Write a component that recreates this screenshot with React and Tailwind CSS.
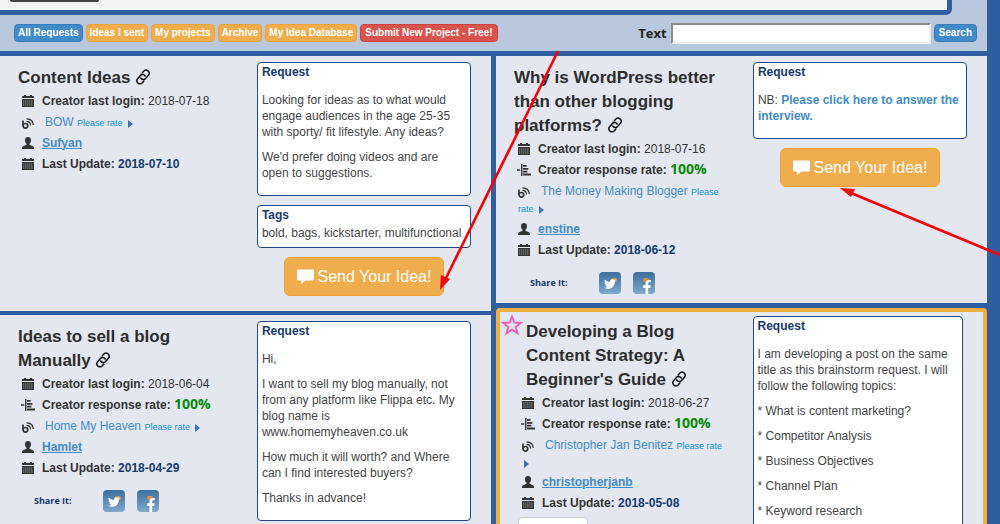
import { FaFacebookF, FaTwitter } from "react-icons/fa";

const filters = ["Ideas I sent", "My projects", "Archive", "My Idea Database"];

const leftRequests = [
  {
    title: "Content Ideas",
    login: "2018-07-18",
    blog: "BOW",
    user: "Sufyan",
    updated: "2018-07-10",
    body: [
      "Looking for ideas as to what would engage audiences in the age 25-35 with sporty/ fit lifestyle. Any ideas?",
      "We'd prefer doing videos and are open to suggestions.",
    ],
    tags: "bold, bags, kickstarter, multifunctional",
    canSend: true,
  },
  {
    title: "Ideas to sell a blog Manually",
    login: "2018-06-04",
    rate: "100%",
    blog: "Home My Heaven",
    user: "Hamlet",
    updated: "2018-04-29",
    share: true,
    body: [
      "Hi,",
      "I want to sell my blog manually, not from any platform like Flippa etc. My blog name is www.homemyheaven.co.uk",
      "How much it will worth? and Where can I find interested buyers?",
      "Thanks in advance!",
    ],
  },
];

const rightRequests = [
  {
    title: "Why is WordPress better than other blogging platforms?",
    login: "2018-07-16",
    rate: "100%",
    blog: "The Money Making Blogger",
    user: "enstine",
    updated: "2018-06-12",
    share: true,
    body: [
      <>
        NB:{" "}
        <a href="#interview" className="font-bold text-[#428bca]">
          Please click here to answer the interview.
        </a>
      </>,
    ],
    canSend: true,
  },
  {
    title: "Developing a Blog Content Strategy: A Beginner's Guide",
    login: "2018-06-27",
    rate: "100%",
    blog: "Christopher Jan Benitez",
    user: "christopherjanb",
    updated: "2018-05-08",
    featured: true,
    body: [
      "I am developing a post on the same title as this brainstorm request. I will follow the following topics:",
      "* What is content marketing?",
      "* Competitor Analysis",
      "* Business Objectives",
      "* Channel Plan",
      "* Keyword research",
    ],
  },
];

function CalendarIcon() {
  return (
    <svg viewBox="0 0 12 12" className="h-3 w-3" fill="currentColor">
      <path d="M0 1h2V0h2v1h4V0h2v1h2v2H0zM0 4h12v8H0z" />
      <path d="M1 6h10M1 8h10M1 10h10" stroke="#e4e7ef" strokeWidth="0.5" strokeDasharray="1.4 0.6" />
    </svg>
  );
}

function RateIcon() {
  return (
    <svg viewBox="0 0 14 12" className="h-3 w-3.5 shrink-0" fill="currentColor">
      <path d="M0 5.2h3.2v1.6H0zM4 0h1.4v12H4zM6 1h3.6v1.8H6zM6 4h5.4v1.8H6zM6 6.8h4.4v1.6H6zM6 9.6h8v1.8H6z" />
    </svg>
  );
}

function BlogIcon() {
  return (
    <svg viewBox="0 0 12 12" className="mr-[11px] inline h-3 w-3 align-[-3px]" fill="none" stroke="currentColor">
      <path d="M1 3.5v5.3" strokeWidth="1.7" />
      <circle cx="3.4" cy="8.8" r="2.3" strokeWidth="1.7" />
      <path d="M4.5 4.4c2.400 0 4 1.500 4 4" strokeWidth="1.2" />
      <path d="M4.500 1.900c4 0 6.700 2.400 6.700 6.200" strokeWidth="1.200" />
    </svg>
  );
}

function UserIcon() {
  return (
    <svg viewBox="0 0 12 12" className="h-3 w-3" fill="currentColor">
      <path d="M6 0C4.200 0 3 1.200 3 3.200c0 1.700.7 2.900 1.500 3.600v1L1 9.300C.3 9.600 0 10.200 0 11v1h12v-1c0-.8-.3-1.400-1-1.700L7.500 7.800v-1C8.300 6.100 9 4.900 9 3.200 9 1.200 7.800 0 6 0z" />
    </svg>
  );
}

function ChainIcon() {
  return (
    <svg viewBox="0 0 16 16" className="h-4 w-4" fill="none" stroke="currentColor" strokeWidth="1.500" strokeLinecap="round">
      <g transform="rotate(-50 8 8)">
        <path d="M5.500 11.200H3.200a3.100 3.100 0 0 1 0-6.200H7.500a3 3 0 0 1 2.700 4.200" />
        <path d="M10.500 4.800h2.300a3.100 3.100 0 0 1 0 6.200H8.500a3 3 0 0 1-2.700-4.200" />
      </g>
    </svg>
  );
}

function StarIcon() {
  return (
    <svg viewBox="0 0 24 24" className="absolute top-px left-0 h-6 w-6" fill="none" stroke="#ee63b4" strokeWidth="2">
      <path d="M12 3.500l2.300 6.100 6.500.3-5.100 4.100 1.800 6.300L12 16.700l-5.500 3.600 1.800-6.300-5.100-4.100 6.500-.3z" />
    </svg>
  );
}

function Row({ icon, children }) {
  return (
    <li className="flex h-[21px] items-center gap-2">
      <span className="flex w-3 shrink-0 justify-center">{icon}</span>
      <span className="whitespace-nowrap">{children}</span>
    </li>
  );
}

const shareLink =
  "relative flex h-[22px] w-[22px] items-end justify-center rounded bg-linear-to-b from-[#3b6f9f] to-[#7fa9cd]";

function ShareBar() {
  return (
    <div className="mt-3 flex items-center pl-4 font-['Open_Sans',sans-serif]">
      <span className="mr-[31px] text-[9px] font-bold text-[#15396f]">Share It:</span>
      <a href="#twitter" aria-label="Twitter" className={`${shareLink} mr-3 pb-1`}>
        <span className="absolute top-1.5 right-1 h-1 w-1.5 rounded-full bg-[#e0913f]" />
        <FaTwitter className="relative h-3 w-3 text-white" />
      </a>
      <a href="#facebook" aria-label="Facebook" className={shareLink}>
        <span className="absolute top-1.5 right-1.5 h-1 w-1.5 rounded-full bg-[#e0913f]" />
        <FaFacebookF className="relative ml-1.5 h-3.5 w-3.5 text-white" />
      </a>
    </div>
  );
}

function RequestCard({ item, last }) {
  return (
    <article
      className={`relative grid grid-cols-[6fr_5fr] items-start bg-[#e4e7ef] pr-5 ${
        item.featured ? "rounded-sm border-4 border-[#f0b040] pt-1" : "pt-1.5"
      } ${last ? "flex-1" : ""}`}
    >
      {item.featured && <StarIcon />}
      <div className="pt-1 pr-6 pb-[9px] pl-[18px]">
        <h2 className={`text-[17px] leading-6 font-bold text-[#2d2d2d] ${item.featured ? "pl-2" : ""}`}>
          {item.title}{" "}
          <a href="#permalink" aria-label="Permalink" className="inline-block align-[-2px] text-[#111]">
            <ChainIcon />
          </a>
        </h2>
        <ul className="pl-1 text-xs text-[#333]">
          <Row icon={<CalendarIcon />}>
            <b>Creator last login:</b> {item.login}
          </Row>
          {item.rate && (
            <Row icon={<RateIcon />}>
              <b>Creator response rate:</b>{" "}
              <b className="font-['Open_Sans',sans-serif] text-sm leading-4 text-[#048a04]">{item.rate}</b>
            </Row>
          )}
          <li className="pt-[3px] pb-px leading-4">
            <BlogIcon />
            <a href="#blog" className="text-[#428bca]">{item.blog}</a>{" "}
            <a href="#rate" className="text-[9px] text-[#0d93cf]">Please rate</a>{" "}
            <svg viewBox="0 0 5 8" className="ml-0.5 inline h-2 w-[5px] align-[-2px]" fill="#3a72bd">
              <path d="M0 0l5 4-5 4z" />
            </svg>
          </li>
          <Row icon={<UserIcon />}>
            <a href="#user" className="font-bold text-[#428bca] underline">{item.user}</a>
          </Row>
          <Row icon={<CalendarIcon />}>
            <b>Last Update:</b> <b className="text-[#15396f]">{item.updated}</b>
          </Row>
        </ul>
        {item.share && <ShareBar />}
        {item.featured && <div className="mt-1 h-8 w-[70px] rounded-sm border border-[#ccc] bg-white" />}
      </div>
      <div className="flex flex-col text-xs leading-4 text-[#444]">
        <section className="rounded border border-[#1d4786] bg-white px-1 pt-px pb-3.5">
          <h3 className="font-bold text-[#15396f]">Request</h3>
          <div className="mt-3 flex flex-col gap-[9px]">
            {item.body.map((text, i) => (
              <p key={i}>{text}</p>
            ))}
          </div>
        </section>
        {item.tags && (
          <section className="mt-[9px] rounded border border-[#1d4786] bg-white px-1 pt-px pb-1.5">
            <h3 className="font-bold text-[#15396f]">Tags</h3>
            <p className="mt-0.5 whitespace-nowrap">{item.tags}</p>
          </section>
        )}
        {item.canSend && (
          <button className="mt-[9px] mb-[15px] flex h-[39px] items-center gap-1 self-center rounded-md border border-[#eea236] bg-[#f0ad4e] px-3 text-base text-white">
            <svg viewBox="0 0 17 16" className="h-4 w-[17px]" fill="currentColor">
              <path d="M1 .5h15a1 1 0 0 1 1 1v9a1 1 0 0 1-1 1H8l-4 4v-4H1a1 1 0 0 1-1-1v-9a1 1 0 0 1 1-1z" />
            </svg>
            Send Your Idea!
          </button>
        )}
      </div>
    </article>
  );
}

function Arrows() {
  return (
    <svg className="pointer-events-none absolute top-0 left-0 h-[524px] w-[1000px]" viewBox="0 0 1000 524">
      <path d="M558 51L445 280M1000 255L851 193" stroke="#fb0007" strokeWidth="2.6" fill="none" />
      <path d="M440 290l1-15 9 4zM840 188l15 1-4 8z" fill="#fb0007" />
    </svg>
  );
}

export default function App() {
  return (
    <div className="relative flex h-screen flex-col overflow-hidden bg-[#2f5fa0] pr-[13px] font-['Liberation_Sans',Arial,sans-serif]">
      <header className="bg-[#b9c8dc]">
        <div className="mr-[35px] h-[15px] rounded-br-md border-r-[5px] border-b-[5px] border-[#2f5fa0] bg-[#f3f3f3]">
          <div className="ml-2.5 h-0.5 w-[89px] rounded-b bg-[#444]" />
        </div>
        <div className="flex h-9 items-center justify-between pr-2.5 pl-3.5">
          <nav className="flex gap-[3px] text-[10px] leading-4 font-bold text-white">
            <button className="rounded-sm border border-[#357ebd] bg-[#428bca] px-[3px]">All Requests</button>
            {filters.map((name) => (
              <button key={name} className="rounded-sm border border-[#eea236] bg-[#f0ad4e] px-[3px]">{name}</button>
            ))}
            <button className="rounded-sm border border-[#d43f3a] bg-[#d9534f] px-1">Submit New Project - Free!</button>
          </nav>
          <form className="flex items-center">
            <label htmlFor="text" className="mr-1 font-['Open_Sans',sans-serif] text-[13px] leading-4 font-bold text-[#222]">Text</label>
            <input id="text" type="text" className="mr-[3px] h-[21px] w-[260px] border-2 border-t-[#8c8c8c] border-r-[#eee] border-b-[#eee] border-l-[#8c8c8c] bg-white px-1 text-xs" />
            <button type="button" className="rounded-sm border border-[#357ebd] bg-[#428bca] px-1 text-[10px] leading-4 font-bold text-white">Search</button>
          </form>
        </div>
      </header>
      <main className="mt-[5px] grid min-h-0 flex-1 grid-cols-2 gap-[5px]">
        <div className="flex flex-col gap-1">
          {leftRequests.map((item, i) => (
            <RequestCard key={item.title} item={item} last={i === 1} />
          ))}
        </div>
        <div className="flex flex-col gap-[5px]">
          {rightRequests.map((item, i) => (
            <RequestCard key={item.title} item={item} last={i === 1} />
          ))}
        </div>
      </main>
      <Arrows />
    </div>
  );
}
